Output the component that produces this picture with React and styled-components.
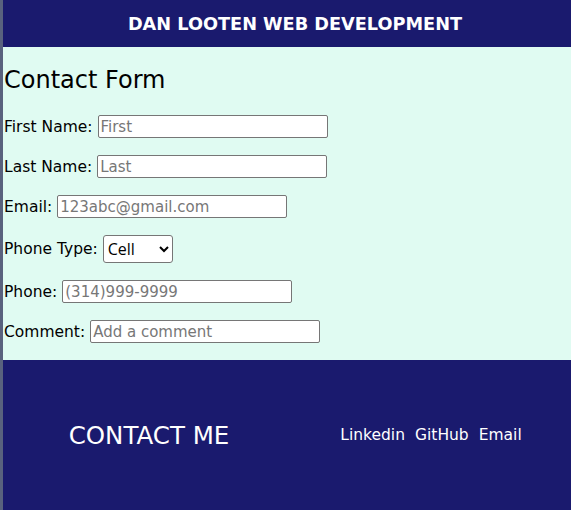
import React from "react";
import styled, { createGlobalStyle } from "styled-components";

const Global = createGlobalStyle`
  html, body { margin: 0; padding: 0; background: #e0fbf2; }
  body { font-family: "DejaVu Sans", "Liberation Sans", sans-serif; }
`;

const Page = styled.div`
  border-left: 3px solid #59627e;
  display: flex;
  flex-direction: column;
  background: #e0fbf2;
`;

const Header = styled.header`
  background: #1a1a6e;
  height: 47px;
  display: flex;
  align-items: center;
  justify-content: center;
  padding-left: 16px;
`;

const SiteTitle = styled.h1`
  margin: 0;
  color: #fff;
  font-size: 17.7px;
  font-weight: bold;
`;

const Main = styled.main`
  padding: 0 0 17px 1px;
`;

const Heading = styled.h2`
  margin: 18px 0 20px;
  font-size: 24px;
  font-weight: normal;
  color: #000;
  line-height: 30px;
`;

const Row = styled.div`
  display: flex;
  align-items: center;
  gap: 5px;
  margin-bottom: ${(p) => (p.$last ? 0 : 17)}px;
  font-size: 15.5px;
  line-height: 18px;
  color: #000;
`;

const Input = styled.input`
  box-sizing: border-box;
  width: 230px;
  height: 23px;
  border: 1px solid #767676;
  border-radius: 2px;
  padding: 1px 2px;
  font-family: "DejaVu Sans", sans-serif;
  font-size: 15px;
  background: #fff;
  &::placeholder { color: #777; }
`;

const Select = styled.select`
  box-sizing: border-box;
  width: 70px;
  height: 28px;
  border: 1px solid #767676;
  border-radius: 3px;
  font-family: "Open Sans", sans-serif;
  font-size: 16px;
  background: #fff;
  color: #000;
`;

const Footer = styled.footer`
  background: #1a1a6e;
  height: 150px;
  display: grid;
  grid-template-columns: 1fr 1fr;
  align-items: center;
`;

const FooterTitle = styled.h3`
  margin: 0;
  color: #fff;
  font-size: 24.5px;
  font-weight: normal;
  text-align: center;
  padding-left: 8px;
`;

const Links = styled.nav`
  display: flex;
  justify-content: center;
  gap: 10px;
  padding-left: 4px;
`;

const Link = styled.a`
  color: #fff;
  text-decoration: none;
  font-size: 15.5px;
`;

export default function App() {
  return (
    <>
      <Global />
      <Page>
        <Header>
          <SiteTitle>DAN LOOTEN WEB DEVELOPMENT</SiteTitle>
        </Header>
        <Main>
          <Heading>Contact Form</Heading>
          <Row>
            <span>First Name:</span>
            <Input placeholder="First" />
          </Row>
          <Row>
            <span>Last Name:</span>
            <Input placeholder="Last" />
          </Row>
          <Row>
            <span>Email:</span>
            <Input placeholder="123abc@gmail.com" />
          </Row>
          <Row>
            <span>Phone Type:</span>
            <Select defaultValue="Cell">
              <option>Cell</option>
              <option>Home</option>
              <option>Work</option>
            </Select>
          </Row>
          <Row>
            <span>Phone:</span>
            <Input placeholder="(314)999-9999" />
          </Row>
          <Row $last>
            <span>Comment:</span>
            <Input placeholder="Add a comment" />
          </Row>
        </Main>
        <Footer>
          <FooterTitle>CONTACT ME</FooterTitle>
          <Links>
            <Link href="#">Linkedin</Link>
            <Link href="#">GitHub</Link>
            <Link href="#">Email</Link>
          </Links>
        </Footer>
      </Page>
    </>
  );
}
